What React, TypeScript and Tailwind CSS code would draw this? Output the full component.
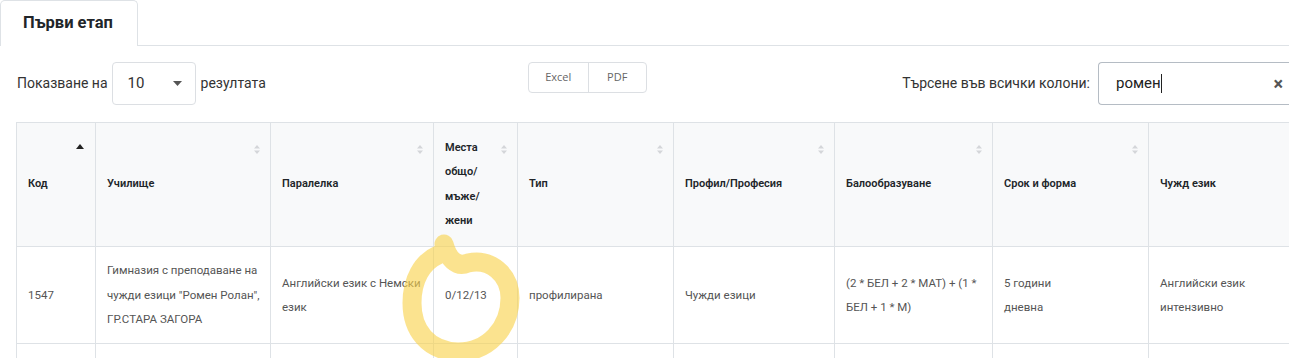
import React from 'react';

const columns = [
  { label: 'Код', width: 79, sorted: true },
  { label: 'Училище', width: 175 },
  { label: 'Паралелка', width: 163 },
  { label: 'Места общо/ мъже/ жени', width: 84 },
  { label: 'Тип', width: 156 },
  { label: 'Профил/Професия', width: 161 },
  { label: 'Балообразуване', width: 158 },
  { label: 'Срок и форма', width: 156 },
  { label: 'Чужд език', width: 160 },
];

const row = [
  '1547',
  'Гимназия с преподаване на чужди езици "Ромен Ролан", ГР.СТАРА ЗАГОРА',
  'Английски език с Немски език',
  '0/12/13',
  'профилирана',
  'Чужди езици',
  '(2 * БЕЛ + 2 * МАТ) + (1 * БЕЛ + 1 * М)',
  '5 години\nдневна',
  'Английски език\nинтензивно',
];

const SortIcon = ({ active }: { active?: boolean }) =>
  active ? (
    <svg width="8" height="6" viewBox="0 0 8 6" className="absolute right-[11px] top-[21px]">
      <path d="M0 5 L4 0 L8 5 Z" fill="#222" />
    </svg>
  ) : (
    <svg width="6" height="9" viewBox="0 0 6 9" className="absolute right-[10px] top-[22px]">
      <path d="M0 3.5 L3 0 L6 3.5 Z M0 5.5 L3 9 L6 5.5 Z" fill="#d4d6d9" />
    </svg>
  );

export default function App() {
  return (
    <div className="relative w-[1289px] h-[358px] overflow-hidden bg-white font-['Roboto',sans-serif]">
      {/* tabs */}
      <div className="flex h-[46px]">
        <div className="w-[138px] h-[46px] border border-b-0 border-[#dee2e6] rounded-t-[5px] flex items-center pl-[22px] text-[16.5px] font-bold text-[#212529] bg-white">
          Първи етап
        </div>
        <div className="flex-1 border-b border-[#dee2e6]" />
      </div>

      {/* toolbar */}
      <div className="flex items-start h-[76px] pt-[16px]">
        <div className="flex items-center pl-[17px] text-[14px] text-[#333]">
          <span>Показване на</span>
          <div className="ml-[4px] mr-[5px] w-[84px] h-[43px] border border-[#dcdfe3] rounded-[4px] flex items-center justify-between pl-[15px] pr-[13px] text-[15px]">
            <span>10</span>
            <svg width="9" height="5" viewBox="0 0 9 5">
              <path d="M0 0 L9 0 L4.5 5 Z" fill="#555" />
            </svg>
          </div>
          <span>резултата</span>
        </div>
        <div className="ml-[262px] flex h-[31px] border border-[#dcdfe3] rounded-[4px] text-[11px] text-[#666] font-['Open_Sans',sans-serif]">
          <div className="w-[60px] flex items-center justify-center border-r border-[#dcdfe3]">Excel</div>
          <div className="w-[57px] flex items-center justify-center">PDF</div>
        </div>
        <div className="ml-auto flex items-center text-[14px] text-[#333]">
          <span className="mr-[8px]">Търсене във всички колони:</span>
          <div className="w-[191px] h-[43px] border border-[#b5bcc4] rounded-l-[4px] border-r-0 flex items-center pl-[17px] pr-[6px] text-[15px] text-[#222]">
            <span>ромен</span>
            <span className="w-px h-[19px] bg-[#222]" />
            <span className="ml-auto text-[#555] text-[18px] font-bold leading-none">×</span>
          </div>
        </div>
      </div>

      {/* table */}
      <div className="pl-[16px]">
        <table className="border-collapse table-fixed" style={{ width: 1292 }}>
          <colgroup>
            {columns.map((c) => (
              <col key={c.label} style={{ width: c.width }} />
            ))}
          </colgroup>
          <thead>
            <tr className="h-[124px] bg-[#f8f9fa]">
              {columns.map((c) => (
                <th
                  key={c.label}
                  className="relative border border-[#dee2e6] text-left align-middle text-[11px] font-semibold text-[#212529] pl-[11px] pr-[24px] leading-[24.5px]"
                >
                  {c.label}
                  <SortIcon active={c.sorted} />
                </th>
              ))}
            </tr>
          </thead>
          <tbody>
            <tr className="h-[97px]">
              {row.map((v, i) => (
                <td
                  key={i}
                  className="border border-[#dee2e6] align-middle text-[11.5px] text-[#555] pl-[11px] pr-[3px] leading-[24.5px] whitespace-pre-line"
                >
                  {v}
                </td>
              ))}
            </tr>
            <tr className="h-[30px]">
              {row.map((_, i) => (
                <td key={i} className="border border-[#dee2e6]" />
              ))}
            </tr>
          </tbody>
        </table>
      </div>

      {/* highlighter annotation */}
      <svg className="absolute left-0 top-0 pointer-events-none" width="1289" height="358" viewBox="0 0 1289 358">
        <path
          d="M444 244 C 448 258, 456 268, 468 263 C 490 258, 510 274, 510 298 C 510 328, 488 352, 458 352 C 428 351, 412 330, 412 303 C 412 280, 422 262, 438 255"
          fill="none"
          stroke="#f8d24a"
          strokeOpacity="0.62"
          strokeWidth="19"
          strokeLinecap="round"
          strokeLinejoin="round"
        />
      </svg>
    </div>
  );
}
